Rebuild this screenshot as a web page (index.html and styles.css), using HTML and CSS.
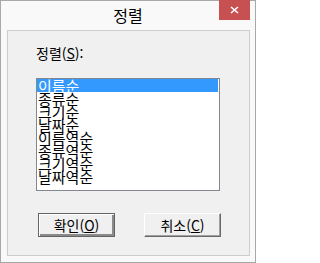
FILE: index.html
```html
<!DOCTYPE html>
<html lang="ko">
<head>
<meta charset="utf-8">
<link rel="stylesheet" href="styles.css">
</head>
<body>
<div class="window">
  <div class="titlebar">
    <span></span>
    <span class="title">정렬</span>
    <span class="controls">
      <span class="close" aria-label="닫기">
        <svg width="9" height="8" viewBox="0 0 9 8"><path d="M1 1 L8 7 M8 1 L1 7" stroke="#fff" stroke-width="1.6" fill="none"/></svg>
      </span>
    </span>
  </div>
  <div class="client">
    <div class="label">정렬(<u>S</u>):</div>
    <ul class="list">
      <li class="item selected">이름순</li>
      <li class="item">종류순</li>
      <li class="item">크기순</li>
      <li class="item">날짜순</li>
      <li class="item">이름역순</li>
      <li class="item">종류역순</li>
      <li class="item">크기역순</li>
      <li class="item">날짜역순</li>
    </ul>
    <div class="buttons">
      <button class="btn default">확인(<u>O</u>)</button>
      <button class="btn">취소(<u>C</u>)</button>
    </div>
  </div>
</div>
</body>
</html>
```

FILE: styles.css
```css
html, body {
  margin: 0;
  padding: 0;
  background: #ffffff;
}
body {
  font-family: "Noto Sans CJK KR", "Noto Sans", sans-serif;
  color: #000;
}
.window {
  box-sizing: border-box;
  width: 256px;
  height: 263px;
  border: 1px solid #a8a8a8;
  background: #f9f9f9;
  display: flex;
  flex-direction: column;
}
.titlebar {
  height: 29px;
  display: grid;
  grid-template-columns: 1fr auto 1fr;
  align-items: start;
}
.title {
  font-size: 16px;
  line-height: 16px;
  margin-top: 6px;
  color: #000;
}
.controls {
  display: flex;
  justify-content: flex-end;
  padding-right: 5px;
}
.close {
  width: 31px;
  height: 20px;
  margin-top: -1px;
  background: #c75050;
  display: flex;
  align-items: center;
  justify-content: center;
}
.client {
  box-sizing: border-box;
  margin: 0 5px 6px 6px;
  flex: 1;
  border: 1px solid #cdcdcd;
  background: #f0f0f0;
  padding: 15px 0 0 28px;
  display: flex;
  flex-direction: column;
}
.label {
  font-size: 14px;
  line-height: 15px;
  height: 15px;
}
.label u, .btn u {
  text-decoration-thickness: 1px;
  text-underline-offset: 1px;
}
.list {
  list-style: none;
  margin: 17px 0 0 0;
  padding: 0;
  box-sizing: border-box;
  width: 184px;
  height: 113px;
  border: 1px solid #828790;
  background: #fff;
  overflow: hidden;
}
.item {
  font-size: 15px;
  line-height: 14px;
  height: 13px;
  padding-left: 1px;
  margin-right: 1px;
  white-space: nowrap;
}
.item.selected {
  background: #3399ff;
  color: #fff;
}
.buttons {
  display: flex;
  gap: 29px;
  margin-top: 22px;
  padding-left: 2px;
}
.btn {
  box-sizing: border-box;
  width: 77px;
  height: 24px;
  margin: 0;
  padding: 0;
  font-family: "Noto Sans CJK KR", "Noto Sans", sans-serif;
  font-size: 14px;
  line-height: 20px;
  color: #000;
  background: #f0f0f0;
  border: 1px solid;
  border-color: #ffffff #696969 #696969 #ffffff;
  box-shadow: inset -1px -1px 0 #a0a0a0;
}
.btn.default {
  border: 1px solid #646464;
  box-shadow: inset 1px 1px 0 #ffffff, inset -2px -2px 0 #8a8a8a;
}
```
